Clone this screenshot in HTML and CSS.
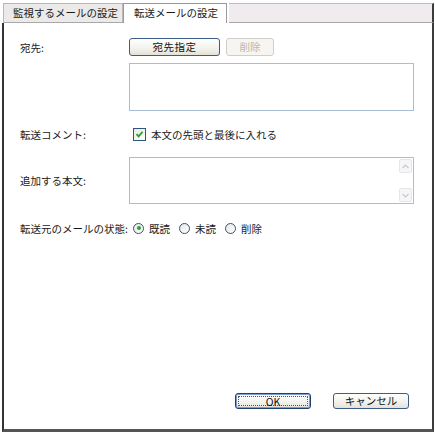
FILE: index.html
```html
<!DOCTYPE html>
<html lang="ja">
<head>
<meta charset="utf-8">
<link rel="stylesheet" href="styles.css">
</head>
<body>
<div class="frame">
  <div class="tabs">
    <div class="tab">監視するメールの設定</div>
    <div class="tab active">転送メールの設定</div>
    <div class="tab-fill"></div>
  </div>
  <div class="panel">
    <div class="row r1">
      <div class="label">宛先:</div>
      <button class="btn btn-dest">宛先指定</button>
      <button class="btn btn-del" disabled>削除</button>
    </div>
    <div class="row r2">
      <div class="label"></div>
      <div class="listbox"></div>
    </div>
    <div class="row r3">
      <div class="label">転送コメント:</div>
      <span class="check"><svg width="9" height="9" viewBox="0 0 9 9"><path d="M1.5 4.2 L3.6 6.4 L7.6 1.8" fill="none" stroke="#21a121" stroke-width="1.7"/></svg></span>
      <span class="ctext">本文の先頭と最後に入れる</span>
    </div>
    <div class="row r4">
      <div class="label">追加する本文:</div>
      <div class="textarea">
        <div class="sb">
          <div class="sbb"><svg width="7" height="5" viewBox="0 0 7 5"><path d="M0.5 4 L3.5 1 L6.5 4" fill="none" stroke="#c7c7d0" stroke-width="1.2"/></svg></div>
          <div class="sbt"></div>
          <div class="sbb"><svg width="7" height="5" viewBox="0 0 7 5"><path d="M0.5 1 L3.5 4 L6.5 1" fill="none" stroke="#c7c7d0" stroke-width="1.2"/></svg></div>
        </div>
      </div>
    </div>
    <div class="row r5">
      <div class="rlabel">転送元のメールの状態:</div>
      <span class="radio on"><span class="dot"></span></span><span class="rtext">既読</span>
      <span class="radio"></span><span class="rtext">未読</span>
      <span class="radio"></span><span class="rtext">削除</span>
    </div>
    <div class="footer">
      <button class="btn btn-ok"><span class="focus">OK</span></button>
      <button class="btn btn-cancel">キャンセル</button>
    </div>
  </div>
</div>
</body>
</html>
```
FILE: styles.css
```css
* { box-sizing: border-box; }
html, body { margin: 0; padding: 0; background: #fff; }
body {
  font-family: "Noto Sans CJK JP", "Liberation Sans", sans-serif;
  font-size: 10.5px;
  color: #1a1a1a;
  width: 435px;
  height: 436px;
  overflow: hidden;
}
.frame {
  margin: 3px 0 0 2px;
  width: 432px;
  height: 429px;
  display: flex;
  flex-direction: column;
}
.tabs {
  display: flex;
  height: 20px;
  flex: none;
}
.tab {
  width: 120px;
  height: 20px;
  background: #ece9e9;
  border: 1px solid #b8b8b8;
  border-bottom: 1px solid #a8a8a8;
  line-height: 18px;
  padding-left: 9px;
  margin-left: 1px;
  white-space: nowrap;
  overflow: hidden;
}
.tab.active {
  width: 104px;
  background: #fff;
  border: 1px solid #9a9a9a;
  border-bottom: none;
  margin-left: 0;
  padding-left: 10px;
}
.tab-fill {
  flex: 1;
  margin-left: 2px;
  background: #efebef;
  border-top: 1px solid #bdbdbd;
  border-bottom: 1px solid #a9a9a9;
  border-right: 2px solid #3c3c3c;
}
.panel {
  flex: 1;
  border-left: 2px solid #333;
  border-right: 2px solid #3c3c3c;
  border-bottom: 3px solid #555;
  display: flex;
  flex-direction: column;
  padding: 0 0 20px 16px;
}
.row { display: flex; align-items: center; }
.label { width: 109px; flex: none; }
.r1 { margin-top: 15px; height: 18px; }
.r2 { margin-top: 7px; }
.r3 { margin-top: 16px; height: 14px; }
.r4 { margin-top: 16px; }
.r5 { margin-top: 17px; height: 14px; }
.btn {
  font-family: inherit;
  font-size: 10.5px;
  height: 18px;
  padding: 0;
  border-radius: 3px;
  background: linear-gradient(#ffffff, #f2f1ec 60%, #e4e1d8);
  color: #111;
  line-height: 16px;
}
.btn-dest {
  width: 91px;
  border: 1px solid #3d5c86;
  letter-spacing: 0.5px;
}
.btn-del {
  width: 48px;
  margin-left: 6px;
  border: 1px solid #d0cec8;
  background: #f6f5f1;
  color: #b9b7b0;
}
.listbox {
  width: 285px;
  height: 48px;
  border: 1px solid #a9bdd3;
  background: #fff;
}
.check {
  width: 13px;
  height: 13px;
  border: 1px solid #2a5680;
  background: linear-gradient(135deg, #e8e8e4, #ffffff);
  margin-left: 4px;
  display: flex;
  align-items: center;
  justify-content: center;
}
.ctext { margin-left: 5px; }
.textarea {
  width: 285px;
  height: 47px;
  border: 1px solid #a9bdd3;
  background: #fff;
  display: flex;
  justify-content: flex-end;
}
.sb {
  width: 16px;
  display: flex;
  flex-direction: column;
  padding: 1px 1px 1px 2px;
}
.sbb {
  height: 14px;
  border: 1px solid #e6e6ea;
  border-radius: 2px;
  background: #f6f6f8;
  display: flex;
  align-items: center;
  justify-content: center;
}
.sbt { flex: 1; }
.rlabel { width: 109px; flex: none; white-space: nowrap; }
.radio {
  width: 11px;
  height: 11px;
  border-radius: 50%;
  border: 1px solid #2a5680;
  background: linear-gradient(135deg, #e6e6e2, #ffffff);
  margin-left: 4px;
  display: flex;
  align-items: center;
  justify-content: center;
}
.radio .dot {
  width: 4px;
  height: 4px;
  border-radius: 50%;
  background: #29a329;
}
.rtext { margin-left: 5px; margin-right: 5px; }
.footer {
  margin-top: auto;
  display: flex;
  padding-left: 215px;
  gap: 22px;
}
.btn-ok, .btn-cancel {
  width: 76px;
  height: 16px;
  line-height: 14px;
}
.btn-ok {
  border: 1px solid #1d3f72;
  box-shadow: inset 0 0 0 1px #7f9dd0;
  padding: 2px;
}
.btn-ok .focus {
  display: block;
  height: 100%;
  border: 1px dotted #555;
  line-height: 9px;
}
.btn-cancel {
  border: 1px solid #3d5c86;
}
```
